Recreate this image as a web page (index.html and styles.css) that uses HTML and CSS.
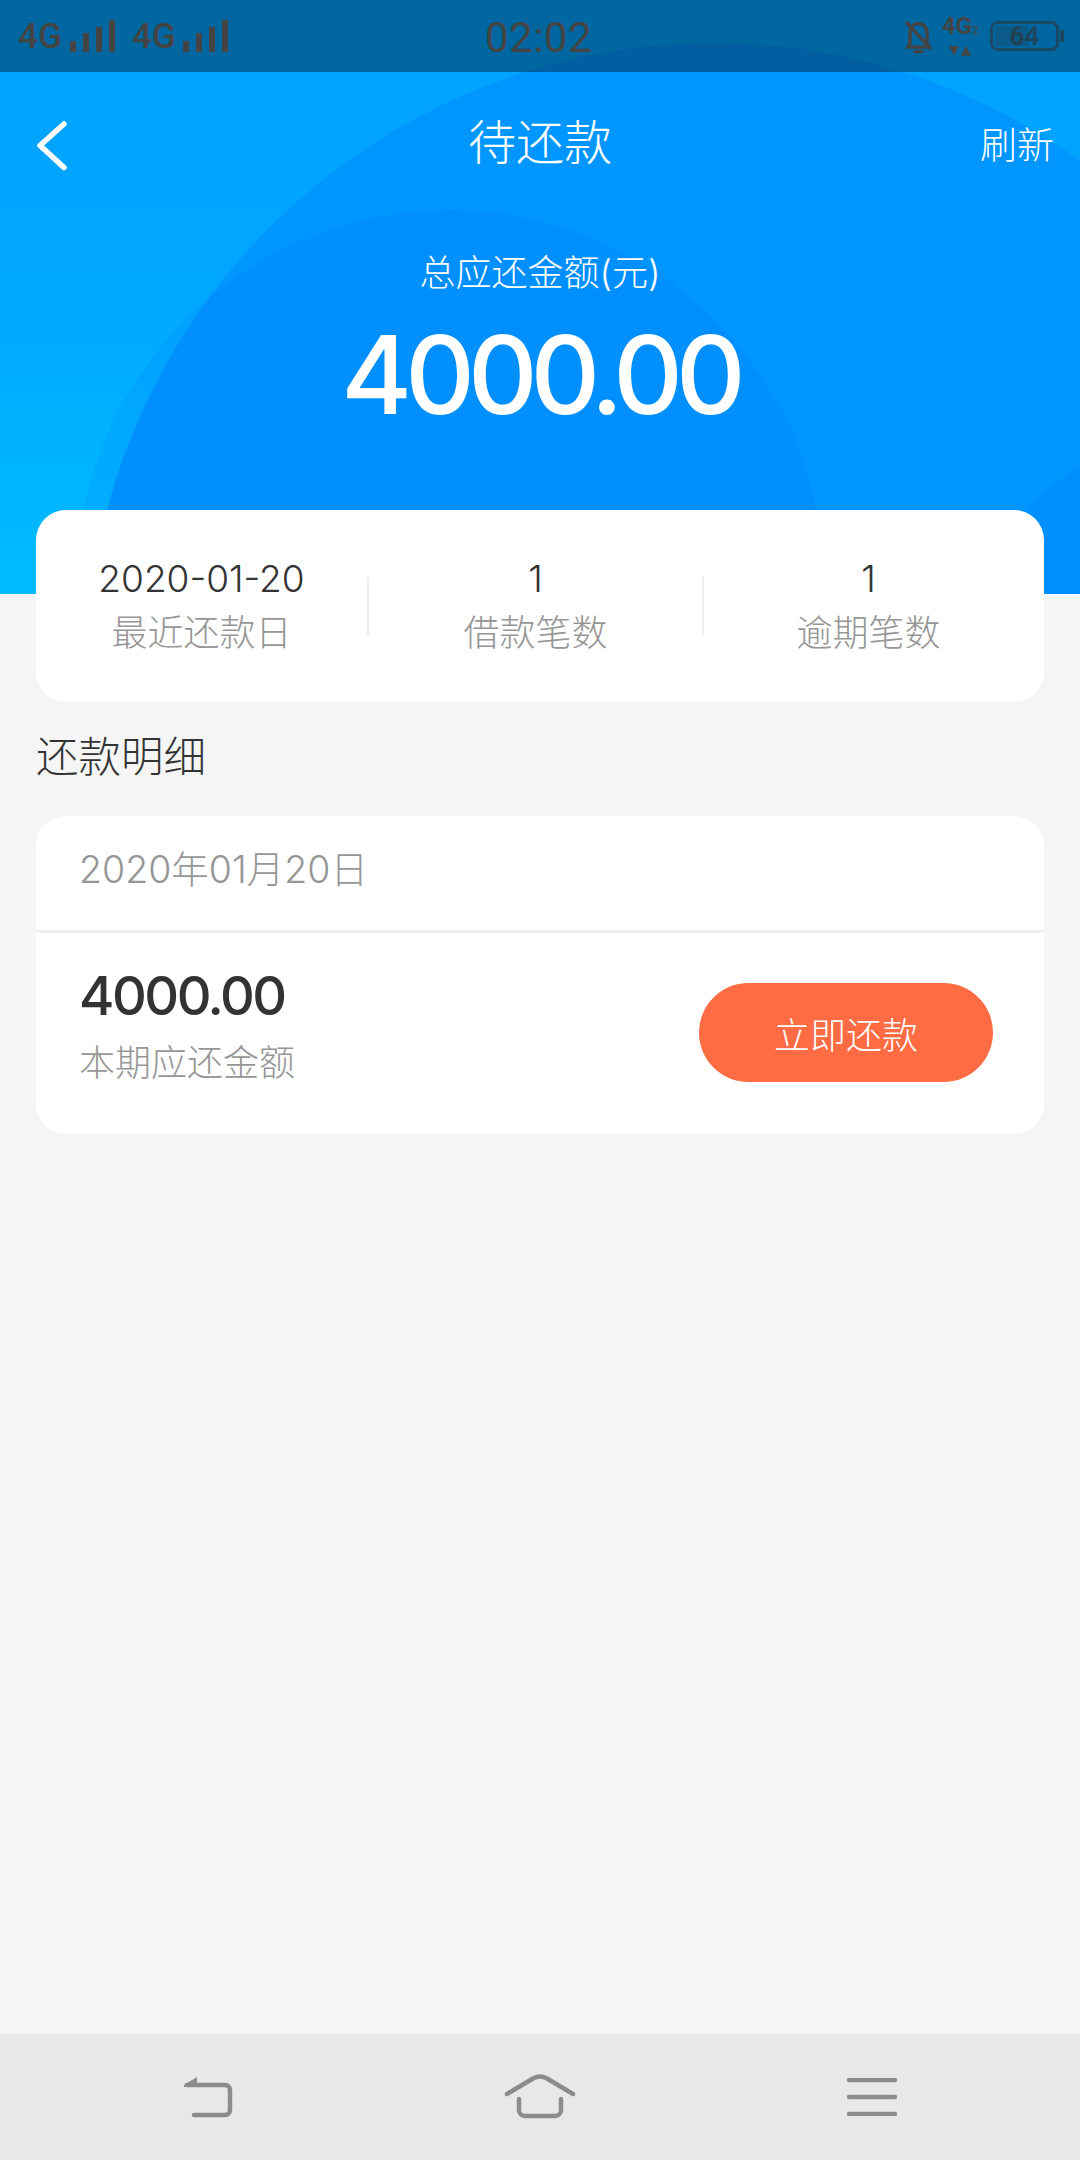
FILE: index.html
```html
<!DOCTYPE html>
<html lang="zh-CN">
<head>
<meta charset="utf-8">
<title>待还款</title>
<link rel="stylesheet" href="styles.css">
</head>
<body>
<div class="screen">
  <header class="hero">
    <svg class="hero-bg" viewBox="0 0 1080 594" width="1080" height="594" aria-hidden="true">
      <defs>
        <linearGradient id="heroFill" x1="0" y1="0" x2="0" y2="1">
          <stop offset="0" stop-color="#00a2ff"/>
          <stop offset="0.45" stop-color="#00a6ff"/>
          <stop offset="1" stop-color="#00bcff"/>
        </linearGradient>
      </defs>
      <rect width="1080" height="594" fill="url(#heroFill)"/>
      <circle cx="714" cy="671" r="628" fill="#0096ff"/>
      <circle cx="450" cy="584" r="374" fill="#0028ff" fill-opacity="0.06"/>
      <circle cx="1240" cy="720" r="300" fill="#0028ff" fill-opacity="0.06"/>
    </svg>
    <div class="status-bar">
      <div class="status-left">
        <div class="signal">
          <span class="net">4G</span>
          <svg class="bars" width="45" height="32" viewBox="0 0 45 32"><path d="M0 21h6v11H0zM13 13h6v19h-6zM26 7h6v25h-6zM39 0h6v32h-6z"/></svg>
        </div>
        <div class="signal">
          <span class="net">4G</span>
          <svg class="bars" width="45" height="32" viewBox="0 0 45 32"><path d="M0 21h6v11H0zM13 13h6v19h-6zM26 7h6v25h-6zM39 0h6v32h-6z"/></svg>
        </div>
      </div>
      <div class="status-time">02:02</div>
      <div class="status-right">
        <svg class="bell" width="27" height="34" viewBox="0 0 27 34" fill="none" stroke="#444" stroke-width="3.500">
          <path d="M3 27h21l-2-4V12a8.500 8.500 0 0 0-17 0v11z"/><path d="M10 31.500h7" stroke-linecap="round"/><path d="M1 2l25 27"/>
        </svg>
        <div class="data-state">
          <span class="data-net">4G<small>2</small></span>
          <svg width="22" height="11" viewBox="0 0 22 11"><path d="M0 1h10L5 10.500zM12 10.500L17 1l5 9.500z" fill="#444"/></svg>
        </div>
        <div class="battery"><span class="battery-fill"></span><span class="battery-level">64</span></div>
      </div>
    </div>
    <nav class="nav">
      <svg class="back" width="34" height="52" viewBox="0 0 34 52" fill="none" stroke="#fff" stroke-width="5.500" stroke-linecap="round" stroke-linejoin="round"><path d="M29 5L5 26.500l24 22"/></svg>
      <h1 class="nav-title">待还款</h1>
      <span class="nav-action">刷新</span>
    </nav>
    <div class="total">
      <div class="total-label">总应还金额(元)</div>
      <div class="total-value">4000.00</div>
    </div>
  </header>

  <main class="content">
    <section class="card summary">
      <div class="stat"><div class="stat-value">2020-01-20</div><div class="stat-label">最近还款日</div></div>
      <div class="stat stat-split stat-mid"><div class="stat-value">1</div><div class="stat-label">借款笔数</div></div>
      <div class="stat stat-split"><div class="stat-value">1</div><div class="stat-label">逾期笔数</div></div>
    </section>
    <h2 class="section-title">还款明细</h2>
    <section class="card detail">
      <div class="detail-date">2020年01月20日</div>
      <div class="detail-row">
        <div>
          <div class="detail-amount">4000.00</div>
          <div class="detail-label">本期应还金额</div>
        </div>
        <button class="pay">立即还款</button>
      </div>
    </section>
  </main>

  <footer class="softkeys">
    <svg width="50" height="42" viewBox="0 0 50 42" fill="none" stroke="#8c8c8c" stroke-width="4.500" stroke-linecap="round" stroke-linejoin="round">
      <path d="M4 9h38a5 5 0 0 1 5 5v20a5 5 0 0 1-5 5H11"/><path d="M1 9L14 1v10H1z" fill="#8c8c8c" stroke="none"/>
    </svg>
    <svg width="72" height="46" viewBox="0 0 72 46" fill="none" stroke="#8c8c8c" stroke-width="4.500" stroke-linecap="round" stroke-linejoin="round">
      <path d="M3 20L29 4.500q7-4 14 0L69 20"/><path d="M15 25v11a6 6 0 0 0 6 6h30a6 6 0 0 0 6-6V25"/>
    </svg>
    <svg width="50" height="38" viewBox="0 0 50 38" fill="none" stroke="#8c8c8c" stroke-width="4.500" stroke-linecap="round">
      <path d="M2 2h46M2 19h46M2 36h46"/>
    </svg>
  </footer>
</div>
</body>
</html>
```
FILE: styles.css
```css
* { box-sizing: border-box; margin: 0; padding: 0; }
html, body { width: 1080px; height: 2160px; overflow: hidden; }
body {
  font-family: Inter, "Noto Sans CJK SC", sans-serif;
  font-weight: 300;
  background: #f5f5f5;
  color: #333;
}
.screen { width: 1080px; height: 2160px; display: flex; flex-direction: column; position: relative; }

/* Blue header with its layered arcs */
.hero { height: 594px; position: relative; color: #fff; flex: none; }
.hero-bg { position: absolute; left: 0; top: 0; display: block; }
.status-bar, .nav, .total { position: relative; }

.status-bar {
  height: 72px;
  background: rgba(0, 0, 0, .37);
  display: grid;
  grid-template-columns: 1fr auto 1fr;
  align-items: center;
  padding: 0 21px 0 18px;
  color: #444;
}
.status-left { display: flex; align-items: center; gap: 17px; }
.signal { display: flex; align-items: flex-end; gap: 8px; margin-top: -1px; }
.net { font: 500 35px/30px Roboto, sans-serif; }
.bars { fill: #444; display: block; }
.status-time { font: 400 42px/48px Roboto, sans-serif; letter-spacing: .5px; margin-top: 4px; }
.status-right { display: flex; justify-content: flex-end; align-items: center; gap: 10px; }
.bell { display: block; margin-top: 1px; }
.data-state { display: flex; flex-direction: column; align-items: center; width: 36px; margin-right: 2px; gap: 4px; }
.data-state svg { display: block; }
.data-net { font: 700 24px/20px Roboto, sans-serif; color: #444; white-space: nowrap; }
.data-net small { font-size: 11px; font-weight: 500; }
.battery {
  width: 69px; height: 30px;
  border: 3px solid rgba(50, 50, 50, .55); border-radius: 8px;
  position: relative;
  font: 700 26px/24px Roboto, sans-serif;
  color: rgba(50, 50, 50, .6);
  text-align: center;
}
.battery-fill {
  position: absolute; left: 2px; top: 2px; bottom: 2px; width: 34px;
  background: rgba(50, 50, 50, .22); border-radius: 3px;
}
.battery-level { position: relative; }
.battery::after {
  content: ""; position: absolute; right: -8px; top: 6px;
  width: 4px; height: 12px; background: rgba(50, 50, 50, .6); border-radius: 0 2px 2px 0;
}

.nav { height: 142px; display: flex; align-items: center; justify-content: space-between; padding: 0 26px 0 35px; }
.nav-title { position: absolute; left: 0; right: 0; text-align: center; font-size: 48px; font-weight: 300; line-height: 60px; }
.nav-action { font-size: 37px; }
.back { display: block; margin-top: 3px; }

.total { text-align: center; padding-top: 34px; }
.total-label { font-size: 36px; line-height: 50px; }
.total-value { font-size: 108px; font-weight: 500; letter-spacing: -7px; line-height: 120px; margin-top: 17px; }

/* Cards over the page body */
.content { flex: 1; margin-top: -84px; padding: 0 36px; position: relative; }
.card { background: #fff; border-radius: 30px; }
.summary { height: 192px; display: flex; align-items: center; }
.stat { flex: 0 0 331px; text-align: center; }
.stat-mid { flex-basis: 335px; }
.stat-split { border-left: 2px solid #eee; height: 58px; display: flex; flex-direction: column; justify-content: center; }
.stat-value { font-size: 37px; line-height: 54px; color: #333; }
.stat-label { font-size: 36px; line-height: 54px; color: #969696; }
.section-title { font-size: 42.500px; font-weight: 300; line-height: 60px; margin: 25px 0 29px; color: #333; }
.detail { height: 318px; overflow: hidden; }
.detail-date { height: 117px; border-bottom: 3px solid #eef0f0; padding: 29px 43px 0; font-size: 37.500px; line-height: 50px; color: #969696; }
.detail-row { display: flex; justify-content: space-between; align-items: center; padding: 31px 51px 0 43px; }
.detail-amount { font-size: 54px; font-weight: 500; letter-spacing: -2.500px; line-height: 64px; color: #333; }
.detail-label { font-size: 36px; line-height: 50px; color: #969696; margin-top: 10px; }
.pay {
  width: 294px; height: 99px; border: 0; border-radius: 50px;
  background: #ff6b42; color: #fff;
  font: 300 36px "Noto Sans CJK SC", sans-serif;
  margin-top: 13px;
}

/* Android soft keys */
.softkeys {
  height: 126px; flex: none;
  background: #e8e8e8;
  display: flex; justify-content: space-between; align-items: center;
  padding: 0 183px;
}
```
